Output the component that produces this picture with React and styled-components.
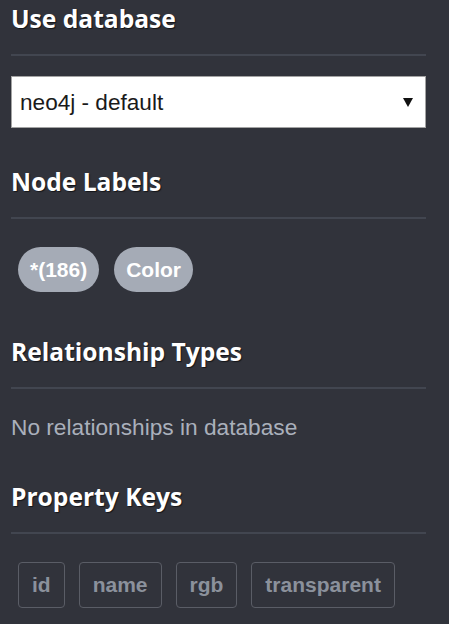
import styled, { createGlobalStyle } from "styled-components";

const GlobalStyle = createGlobalStyle`
  html, body {
    margin: 0;
    padding: 0;
    background: #31333b;
  }
`;

const Drawer = styled.div`
  width: 449px;
  min-height: 624px;
  box-sizing: border-box;
  padding: 3px 23px 0 11px;
  background: #31333b;
  font-family: "Liberation Sans", Arial, sans-serif;
`;

const Section = styled.section`
  margin-bottom: ${(p) => p.$bottom || 0}px;
`;

const Heading = styled.h4`
  margin: 0;
  padding-bottom: 19px;
  border-bottom: 2px solid #424650;
  font-family: "Open Sans", "Noto Sans", sans-serif;
  font-weight: 700;
  font-size: 24.6px;
  line-height: 32px;
  color: #ffffff;
  text-shadow: 1px 1px 1px rgba(0, 0, 0, 0.6);
`;

const Content = styled.div`
  margin-top: ${(p) => p.$top || 20}px;
`;

// native look arrow drawn as svg background
const arrow =
  "data:image/svg+xml;utf8,<svg xmlns='http://www.w3.org/2000/svg' width='10' height='9'><path d='M0 0h10L5 9z' fill='%23111'/></svg>";

const Select = styled.select`
  display: block;
  width: 100%;
  height: 52px;
  box-sizing: border-box;
  margin: 0;
  padding: 0 30px 0 8px;
  appearance: none;
  -webkit-appearance: none;
  border: 1px solid #a3a3a3;
  border-radius: 0;
  background: #ffffff url("${arrow}") no-repeat right 12px center;
  font-family: "Liberation Sans", Arial, sans-serif;
  font-size: 22.6px;
  color: #1a1a1a;
  outline: none;
`;

const TagRow = styled.div`
  display: flex;
  flex-wrap: wrap;
  gap: ${(p) => p.$gap || 15}px;
  padding-left: 7px;
`;

const Pill = styled.button`
  height: 45px;
  padding: 0 12px;
  border: none;
  border-radius: 23px;
  background: #a5abb6;
  color: #ffffff;
  font-family: "Liberation Sans", Arial, sans-serif;
  font-weight: 700;
  font-size: 21px;
  cursor: pointer;
`;

const KeyButton = styled.button`
  height: 46px;
  padding: 0 13px;
  border: 1px solid #5a5d66;
  border-radius: 4px;
  background: transparent;
  color: #8b919c;
  font-family: "Liberation Sans", Arial, sans-serif;
  font-weight: 700;
  font-size: 21px;
  cursor: pointer;
`;

const Empty = styled.p`
  margin: 0;
  font-size: 22.7px;
  line-height: 26px;
  color: #aab0bb;
`;

const labels = ["*(186)", "Color"];
const keys = ["id", "name", "rgb", "transparent"];

const App = () => {
  return (
    <>
      <GlobalStyle />
      <Drawer>
        <Section $bottom={38}>
          <Heading>Use database</Heading>
          <Content $top={20}>
            <Select defaultValue="neo4j">
              <option value="neo4j">neo4j - default</option>
              <option value="system">system</option>
            </Select>
          </Content>
        </Section>

        <Section $bottom={44}>
          <Heading>Node Labels</Heading>
          <Content $top={28}>
            <TagRow>
              {labels.map((l) => (
                <Pill key={l}>{l}</Pill>
              ))}
            </TagRow>
          </Content>
        </Section>

        <Section $bottom={41}>
          <Heading>Relationship Types</Heading>
          <Content $top={25}>
            <Empty>No relationships in database</Empty>
          </Content>
        </Section>

        <Section>
          <Heading>Property Keys</Heading>
          <Content $top={28}>
            <TagRow $gap={14}>
              {keys.map((k) => (
                <KeyButton key={k}>{k}</KeyButton>
              ))}
            </TagRow>
          </Content>
        </Section>
      </Drawer>
    </>
  );
};

export default App;
